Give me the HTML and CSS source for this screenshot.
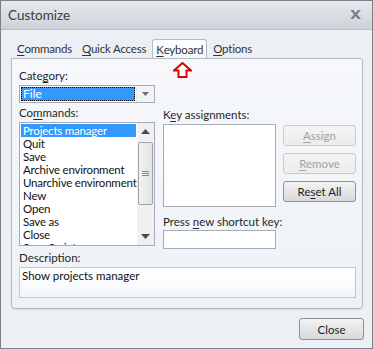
FILE: index.html
```html
<!DOCTYPE html>
<html lang="en">
<head>
    <meta charset="UTF-8">
    <title>Customize</title>
    <link rel="stylesheet" href="styles.css">
</head>
<body>
    <div class="window">
        <div class="titlebar">
            <span class="title">Customize</span>
            <span class="close-x">X</span>
        </div>
        <div class="content">
            <div class="tabs">
                <div class="tab"><u>C</u>ommands</div>
                <div class="tab"><u>Q</u>uick Access</div>
                <div class="tab active"><u>K</u>eyboard</div>
                <div class="tab"><u>O</u>ptions</div>
            </div>
            <div class="panel">
                <!-- red pointer under the active tab -->
                <svg class="pointer" width="19" height="16" viewBox="0 0 19 16">
                    <path d="M9.5 1 L18 8.5 L13.5 8.5 L13.5 15 L5.5 15 L5.5 8.5 L1 8.5 Z" fill="#fff" stroke="#e00000" stroke-width="2" stroke-linejoin="miter"/>
                </svg>
                <div class="columns">
                    <div class="col-left">
                        <div class="label">Cate<u>g</u>ory:</div>
                        <div class="combo">
                            <div class="combo-value"><span>File</span></div>
                            <div class="combo-btn">
                                <svg width="7" height="4" viewBox="0 0 7 4"><path d="M0 0 H7 L3.5 4 Z" fill="#6a6a6a"/></svg>
                            </div>
                        </div>
                        <div class="label">Co<u>m</u>mands:</div>
                        <div class="listbox">
                            <div class="items">
                                <div class="item selected">Projects manager</div>
                                <div class="item">Quit</div>
                                <div class="item">Save</div>
                                <div class="item">Archive environment</div>
                                <div class="item">Unarchive environment</div>
                                <div class="item">New</div>
                                <div class="item">Open</div>
                                <div class="item">Save as</div>
                                <div class="item">Close</div>
                                <div class="item">Save Script</div>
                            </div>
                            <div class="scrollbar">
                                <div class="sb-arrow">
                                    <svg width="9" height="5" viewBox="0 0 9 5"><path d="M4.5 0 L9 5 H0 Z" fill="#4a4a4a"/></svg>
                                </div>
                                <div class="sb-track">
                                    <div class="sb-thumb">
                                        <svg width="7" height="6" viewBox="0 0 7 6"><path d="M0 0.5 H7 M0 2.5 H7 M0 4.5 H7" stroke="#8a8a8a" stroke-width="1"/></svg>
                                    </div>
                                </div>
                                <div class="sb-arrow">
                                    <svg width="9" height="5" viewBox="0 0 9 5"><path d="M0 0 H9 L4.5 5 Z" fill="#4a4a4a"/></svg>
                                </div>
                            </div>
                        </div>
                    </div>
                    <div class="col-mid">
                        <div class="label">K<u>e</u>y assignments:</div>
                        <div class="keybox"></div>
                        <div class="label press">Press <u>n</u>ew shortcut key:</div>
                        <div class="shortcut"></div>
                    </div>
                    <div class="col-btns">
                        <button class="btn disabled"><u>A</u>ssign</button>
                        <button class="btn disabled"><u>R</u>emove</button>
                        <button class="btn">Re<u>s</u>et All</button>
                    </div>
                </div>
                <div class="label desc-label">Description:</div>
                <div class="desc">Show projects manager</div>
            </div>
            <div class="footer">
                <button class="btn close-btn">Close</button>
            </div>
        </div>
    </div>
</body>
</html>
```

FILE: styles.css
```css
body {
    margin: 0;
    font-family: Lato, "Open Sans", sans-serif;
    font-size: 11.5px;
    color: #1e1e1e;
    background: #fff;
}
u {
    text-decoration-thickness: 1px;
    text-underline-offset: 2px;
}
.window {
    width: 373px;
    height: 349px;
    box-sizing: border-box;
    border: 1px solid #7c8187;
    background: #eceff3;
    display: flex;
    flex-direction: column;
}
.titlebar {
    height: 28px;
    flex-shrink: 0;
    display: flex;
    align-items: center;
    justify-content: space-between;
    padding: 0 12px 0 7px;
    background: linear-gradient(#e6e9ed, #d7dce2 60%, #cdd2d8);
    border-bottom: 1px solid #b8bdc3;
}
.title {
    font-size: 13.5px;
    color: #3c3c3c;
}
.close-x {
    font-family: "DejaVu Sans", sans-serif;
    font-size: 12px;
    font-weight: bold;
    color: #7a8088;
    transform: scaleX(1.2);
}
.content {
    flex: 1;
    display: flex;
    flex-direction: column;
    padding: 8px 9px 0 10px;
}
.tabs {
    display: flex;
    align-items: flex-end;
    height: 20px;
    padding-left: 2px;
}
.tab {
    padding: 0 4px 3px;
    margin-right: 2px;
    color: #333;
    letter-spacing: -0.2px;
}
.tab.active {
    height: 20px;
    box-sizing: border-box;
    padding: 0 3px 3px;
    margin: 0 2px 0 0;
    border: 1px solid #b3bac2;
    border-bottom: none;
    border-radius: 3px 3px 0 0;
    background: linear-gradient(#ffffff, #f4f7fa);
    position: relative;
    top: 1px;
    display: flex;
    align-items: flex-end;
}
.panel {
    position: relative;
    height: 251px;
    box-sizing: border-box;
    border: 1px solid #b3bac2;
    border-radius: 0 3px 4px 4px;
    background: linear-gradient(#f6f8fb, #eef2f6);
    box-shadow: 0 1px 1px rgba(0,0,0,0.08);
    padding: 10px 6px 0 7px;
}
.pointer {
    position: absolute;
    left: 161px;
    top: 3px;
}
.label {
    height: 14px;
    line-height: 14px;
    margin-bottom: 2px;
    color: #262626;
    white-space: nowrap;
}
.columns {
    display: flex;
    align-items: flex-start;
}
.col-left {
    width: 136px;
    flex-shrink: 0;
}
.combo {
    display: flex;
    height: 18px;
    box-sizing: border-box;
    border: 1px solid #a5acb5;
    background: #fff;
    margin: 2px 0 3px;
}
.combo-value {
    flex: 1;
    padding: 1px;
}
.combo-value span {
    display: block;
    height: 14px;
    line-height: 12px;
    box-sizing: border-box;
    border: 1px dotted #000;
    background: #3399ff;
    color: #fff;
    padding-left: 1px;
    font-size: 12px;
}
.combo-btn {
    width: 17px;
    display: flex;
    align-items: center;
    justify-content: center;
    border-left: 1px solid #e2e5e9;
    background: #f2f3f5;
}
.listbox {
    display: flex;
    height: 124px;
    box-sizing: border-box;
    border: 1px solid #a5acb5;
    background: #fff;
    overflow: hidden;
}
.items {
    flex: 1;
    min-width: 0;
    overflow: hidden;
    padding: 1px 1px 0 1px;
}
.item {
    height: 13px;
    line-height: 13px;
    padding-left: 2px;
    white-space: nowrap;
    color: #111;
    letter-spacing: -0.2px;
}
.item.selected {
    background: #3399ff;
    color: #fff;
}
.scrollbar {
    width: 17px;
    flex-shrink: 0;
    display: flex;
    flex-direction: column;
    background: #f0f0f0;
}
.sb-arrow {
    height: 17px;
    display: flex;
    align-items: center;
    justify-content: center;
}
.sb-track {
    flex: 1;
    padding: 2px 1px 0;
}
.sb-thumb {
    height: 63px;
    box-sizing: border-box;
    border: 1px solid #a0a5ab;
    border-radius: 2px;
    background: linear-gradient(to right, #f2f2f2, #e3e3e3);
    display: flex;
    align-items: center;
    justify-content: center;
}
.col-mid {
    width: 113px;
    flex-shrink: 0;
    margin-left: 8px;
    padding-top: 39px;
}
.keybox {
    height: 83px;
    box-sizing: border-box;
    border: 1px solid #a5acb5;
    background: #fff;
    margin-bottom: 8px;
}
.label.press {
    margin-bottom: 1px;
}
.shortcut {
    height: 19px;
    box-sizing: border-box;
    border: 1px solid #a5acb5;
    background: #fff;
}
.col-btns {
    width: 73px;
    flex-shrink: 0;
    margin-left: 7px;
    display: flex;
    flex-direction: column;
    gap: 7px;
    padding-top: 56px;
}
.btn {
    height: 21px;
    padding: 0;
    font-family: inherit;
    font-size: 11.5px;
    color: #1e1e1e;
    border: 1px solid #8d9298;
    border-radius: 3px;
    background: linear-gradient(#f3f3f3, #e6e6e6 50%, #d9d9d9);
}
.btn.disabled {
    color: #a2a2a2;
    border-color: #c9cbce;
    background: linear-gradient(#f4f4f4, #ececec);
}
.desc-label {
    margin-top: 2px;
}
.desc {
    height: 31px;
    box-sizing: border-box;
    border: 1px solid #c3c8ce;
    background: linear-gradient(#ffffff, #f3f6f9);
    padding: 1px 2px;
    color: #111;
}
.footer {
    display: flex;
    justify-content: flex-end;
    padding-top: 9px;
}
.close-btn {
    width: 65px;
    height: 22px;
    margin-right: -1px;
}
```
